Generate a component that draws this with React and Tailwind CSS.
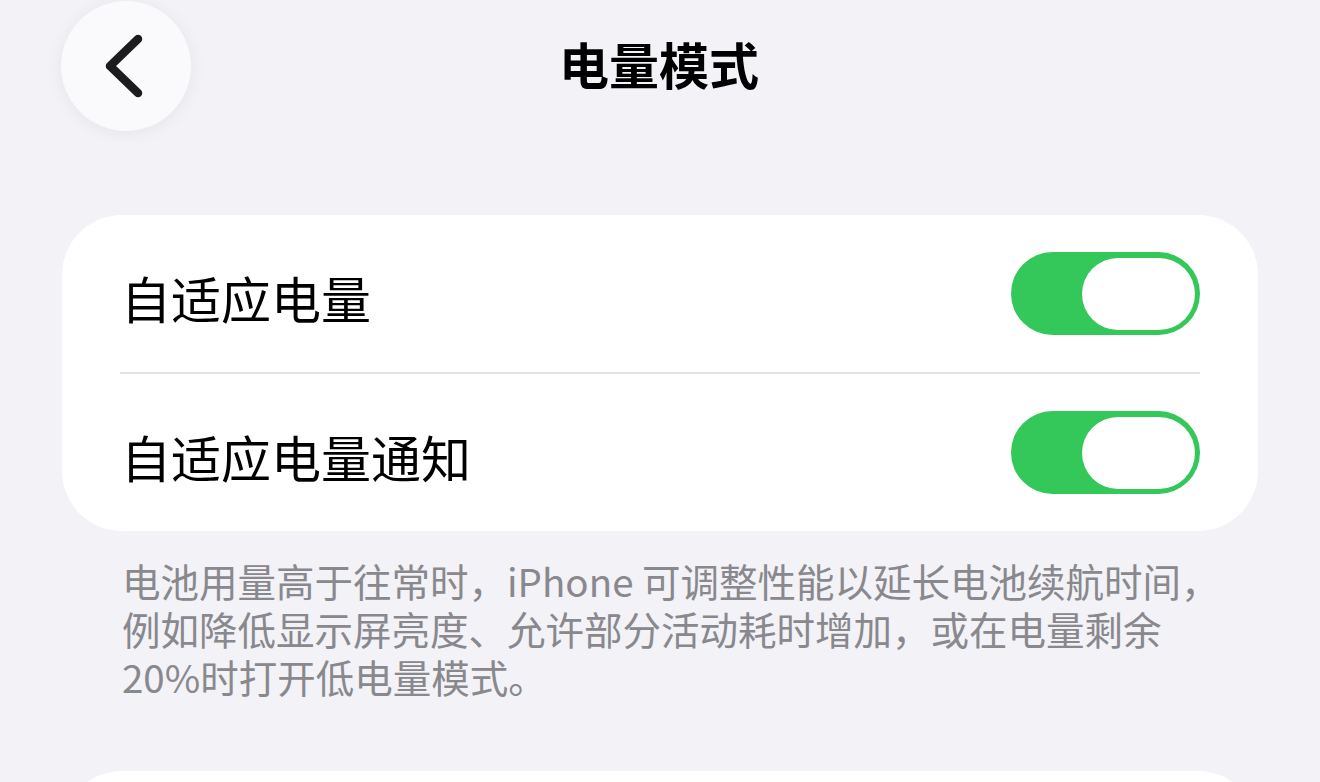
import React from "react";

function Toggle() {
  return (
    <div className="w-[189px] h-[83px] rounded-full bg-[#34c759] flex items-center justify-end pr-[5px]">
      <div className="w-[113px] h-[72px] rounded-full bg-white" />
    </div>
  );
}

function Row({ label }) {
  return (
    <div className="h-[157px] flex items-center justify-between pl-[59px] pr-[58px]">
      <span className="text-[50px] leading-none text-black pt-[6px]">{label}</span>
      <Toggle />
    </div>
  );
}

const noteLines = [
  "电池用量高于往常时，iPhone 可调整性能以延长电池续航时间，",
  "例如降低显示屏亮度、允许部分活动耗时增加，或在电量剩余",
  "20%时打开低电量模式。",
];

export default function App() {
  return (
    <div
      className="w-[1320px] h-[782px] overflow-hidden bg-[#f2f2f7] px-[62px]"
      style={{ fontFamily: '"Noto Sans CJK SC", "Noto Sans", sans-serif' }}
    >
      {/* Header */}
      <div className="grid grid-cols-[1fr_auto_1fr] items-center pt-px">
        <button className="w-[130px] h-[130px] -ml-px rounded-full bg-[#fafafc] shadow-[0_2px_18px_rgba(0,0,0,0.06)] flex items-center justify-center">
          <svg width="60" height="70" viewBox="0 0 60 70" fill="none" className="-ml-[4px]">
            <path d="M44 8 L16 35 L44 62" stroke="#1c1c1e" strokeWidth="8.5" strokeLinecap="round" strokeLinejoin="round" />
          </svg>
        </button>
        <h1 className="text-[50px] font-bold leading-none text-black -mt-[6px] -ml-[2px]">电量模式</h1>
        <div />
      </div>

      {/* Card */}
      <div className="mt-[84px] bg-white rounded-[60px]">
        <Row label="自适应电量" />
        <div className="ml-[58px] mr-[58px] h-[2px] bg-[#e3e3e7]" />
        <Row label="自适应电量通知" />
      </div>

      {/* Footer note */}
      <div className="mt-[25px] pl-[60px] text-[38.5px] text-[#88888d]">
        {noteLines.map((line) => (
          <div key={line} className="h-[48px] leading-[48px] whitespace-nowrap">
            {line}
          </div>
        ))}
      </div>

      {/* Next card peeking */}
      <div className="mt-[71px] h-[120px] bg-white rounded-[60px]" />
    </div>
  );
}
